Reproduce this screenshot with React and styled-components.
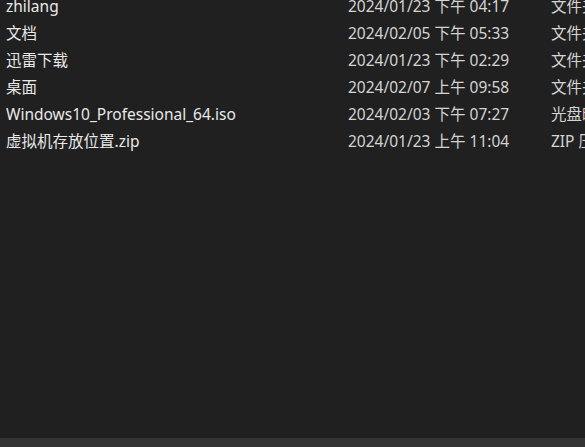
import styled, { createGlobalStyle } from "styled-components";

const GlobalStyle = createGlobalStyle`
  html, body {
    margin: 0;
    padding: 0;
    background: #202020;
    overflow: hidden;
  }
  #root {
    height: 447px;
  }
`;

const Window = styled.div`
  width: 585px;
  height: 447px;
  display: flex;
  flex-direction: column;
  background: #202020;
  overflow: hidden;
  font-family: "Noto Sans", "Noto Sans CJK SC", sans-serif;
  font-size: 15.5px;
  color: #e8e8e8;
`;

const List = styled.div`
  flex: 1;
  overflow: hidden;
`;

const Rows = styled.div`
  margin-top: -8px;
`;

const Row = styled.div`
  display: grid;
  grid-template-columns: 342px 203px 200px;
  height: 27px;
  align-items: center;
  padding-left: 6px;
  white-space: nowrap;
`;

const Cell = styled.div`
  overflow: hidden;
  color: ${(p) => (p.$muted ? "#d4d4d4" : "#e8e8e8")};
`;

const ScrollTrack = styled.div`
  height: 9px;
  background: #333333;
`;

const files = [
  { name: "zhilang", date: "2024/01/23 下午 04:17", type: "文件夹" },
  { name: "文档", date: "2024/02/05 下午 05:33", type: "文件夹" },
  { name: "迅雷下载", date: "2024/01/23 下午 02:29", type: "文件夹" },
  { name: "桌面", date: "2024/02/07 上午 09:58", type: "文件夹" },
  { name: "Windows10_Professional_64.iso", date: "2024/02/03 下午 07:27", type: "光盘映像文件" },
  { name: "虚拟机存放位置.zip", date: "2024/01/23 上午 11:04", type: "ZIP 压缩文件" },
];

export default function App() {
  return (
    <>
      <GlobalStyle />
      <Window>
        <List>
          <Rows>
            {files.map((f) => (
              <Row key={f.name}>
                <Cell>{f.name}</Cell>
                <Cell $muted>{f.date}</Cell>
                <Cell $muted>{f.type}</Cell>
              </Row>
            ))}
          </Rows>
        </List>
        <ScrollTrack />
      </Window>
    </>
  );
}
